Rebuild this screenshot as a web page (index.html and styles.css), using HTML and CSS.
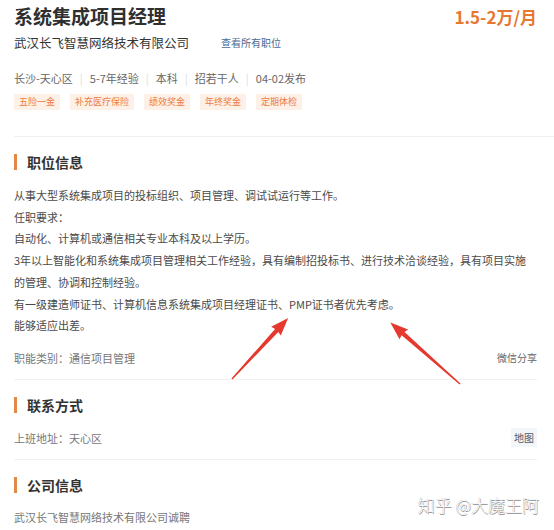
FILE: index.html
```html
<!DOCTYPE html>
<html lang="zh-CN">
<head>
    <meta charset="UTF-8">
    <meta name="viewport" content="width=device-width, initial-scale=1.0">
    <title>系统集成项目经理</title>
    <link rel="stylesheet" href="styles.css">
</head>
<body>
    <div class="page">
        <div class="job-head">
            <div class="title-row">
                <h1 class="job-title">系统集成项目经理</h1>
                <span class="salary">1.5-2万/月</span>
            </div>
            <div class="company-row">
                <span class="company">武汉长飞智慧网络技术有限公司</span>
                <a class="all-jobs">查看所有职位</a>
            </div>
            <div class="meta">
                <span>长沙-天心区</span><i class="sep">|</i><span>5-7年经验</span><i class="sep">|</i><span>本科</span><i class="sep">|</i><span>招若干人</span><i class="sep">|</i><span>04-02发布</span>
            </div>
            <div class="tags">
                <span class="tag">五险一金</span>
                <span class="tag">补充医疗保险</span>
                <span class="tag">绩效奖金</span>
                <span class="tag">年终奖金</span>
                <span class="tag">定期体检</span>
            </div>
        </div>

        <div class="section first">
            <h2 class="section-title">职位信息</h2>
            <div class="desc">
                <p>从事大型系统集成项目的投标组织、项目管理、调试试运行等工作。</p>
                <p>任职要求：</p>
                <p>自动化、计算机或通信相关专业本科及以上学历。</p>
                <p>3年以上智能化和系统集成项目管理相关工作经验，具有编制招投标书、进行技术洽谈经验，具有项目实施的管理、协调和控制经验。</p>
                <p>有一级建造师证书、计算机信息系统集成项目经理证书、PMP证书者优先考虑。</p>
                <p>能够适应出差。</p>
            </div>
            <div class="info-row">
                <span class="muted">职能类别：通信项目管理</span>
                <a class="side-link">微信分享</a>
            </div>
        </div>

        <div class="section">
            <h2 class="section-title">联系方式</h2>
            <div class="info-row">
                <span class="muted">上班地址：天心区</span>
                <a class="side-link map">地图</a>
            </div>
        </div>

        <div class="section last">
            <h2 class="section-title">公司信息</h2>
            <div class="info-row">
                <span class="muted">武汉长飞智慧网络技术有限公司诚聘</span>
            </div>
        </div>
    </div>

    <!-- annotation arrows drawn over the screenshot -->
    <svg class="arrows" width="554" height="530" viewBox="0 0 554 530">
        <g transform="translate(232 379) rotate(-47.4)">
            <polygon class="arrow" points="0,-0.7 66,-2.2 65,-6.5 83,0 65,6.5 66,2.2 0,0.7"/>
        </g>
        <g transform="translate(460 384) rotate(-138.5)">
            <polygon class="arrow" points="0,-0.7 76,-2.2 75,-6.5 93,0 75,6.5 76,2.2 0,0.7"/>
        </g>
    </svg>

    <div class="watermark">知乎 @大魔王阿</div>
</body>
</html>
```

FILE: styles.css
```css
* {
    margin: 0;
    padding: 0;
    box-sizing: border-box;
}

body {
    font-family: "Noto Sans CJK SC", "Noto Sans", sans-serif;
    background: #fff;
    color: #333;
    width: 554px;
    height: 530px;
    overflow: hidden;
    position: relative;
}

.page {
    padding: 0 17px 0 14px;
}

.title-row {
    display: flex;
    justify-content: space-between;
    align-items: center;
    height: 32px;
}

.job-title {
    font-size: 19px;
    font-weight: 700;
    color: #2f2f2f;
    line-height: 32px;
}

.salary {
    font-size: 17px;
    font-weight: 700;
    color: #e8772f;
}

.company-row {
    display: flex;
    align-items: center;
    height: 20px;
}

.company {
    font-size: 12.5px;
    color: #333;
}

.all-jobs {
    font-size: 10px;
    color: #4a6891;
    margin-left: 32px;
}

.meta {
    margin-top: 16px;
    font-size: 11px;
    line-height: 20px;
    color: #666;
}

.sep {
    font-style: normal;
    color: #ddd;
    margin: 0 7px;
}

.tags {
    display: flex;
    gap: 10px;
    margin-top: 6px;
}

.tag {
    height: 16px;
    line-height: 16px;
    padding: 0 5px;
    font-size: 9px;
    color: #ee7a3c;
    background: #fdf0e7;
}

.section {
    border-top: 1px solid #f0f0f0;
    padding: 15px 0 10px;
}

.section.first {
    margin-top: 26px;
    margin-right: -17px;
    padding-right: 17px;
}

.section.last {
    padding-bottom: 0;
}

.section-title {
    font-size: 14px;
    font-weight: 700;
    color: #333;
    line-height: 20px;
    display: flex;
    align-items: center;
    gap: 10px;
}

.section-title::before {
    content: "";
    width: 3px;
    height: 16px;
    background: #e38948;
}

.desc {
    margin-top: 13px;
    max-width: 519px;
    font-size: 11px;
    line-height: 21.7px;
    color: #4a4a4a;
}

.info-row {
    display: flex;
    justify-content: space-between;
    align-items: center;
    margin-top: 12px;
    height: 22px;
}

.first .info-row {
    margin-top: 10px;
}

.last .info-row {
    margin-top: 11px;
}

.muted {
    font-size: 11px;
    color: #777;
}

.side-link {
    font-size: 10px;
    color: #666;
}

.side-link.map {
    background: #f3f6f9;
    color: #4d5a6a;
    padding: 2px 3px;
}

.arrows {
    position: absolute;
    left: 0;
    top: 0;
    pointer-events: none;
}

.arrow {
    fill: #e5392f;
}

.watermark {
    position: absolute;
    left: 418px;
    top: 494px;
    font-size: 17px;
    line-height: 22px;
    font-weight: 300;
    color: #fff;
    text-shadow: 0.5px 0.5px 0.5px #888, -0.5px -0.5px 0.5px #bbb;
}
```
